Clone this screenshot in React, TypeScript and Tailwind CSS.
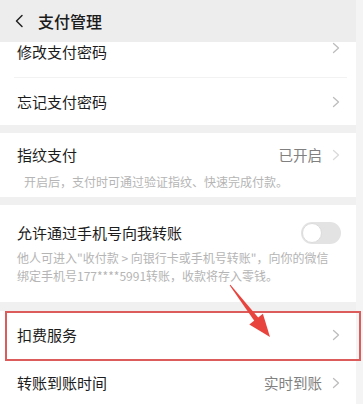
const font = {
  fontFamily: '"Noto Sans CJK SC", "Noto Sans", sans-serif',
};

function Chevron({ light = false }: { light?: boolean }) {
  return (
    <svg width="8" height="12" viewBox="0 0 8 12" className="shrink-0">
      <path
        d="M1.5 1.5l5 4.5-5 4.5"
        fill="none"
        stroke={light ? "#dadada" : "#bdbdbd"}
        strokeWidth="1.3"
        strokeLinecap="round"
        strokeLinejoin="round"
      />
    </svg>
  );
}

function Row({
  label,
  value,
  light = false,
  className = "",
}: {
  label: string;
  value?: string;
  light?: boolean;
  className?: string;
}) {
  return (
    <div className={`flex items-center justify-between pl-[17px] pr-[16px] ${className}`}>
      <span className="text-[15px] leading-[20px] text-[#1c1c1c]">{label}</span>
      <div className="flex items-center gap-[10px]">
        {value && (
          <span className="text-[14.5px] leading-[20px] text-[#808080]">{value}</span>
        )}
        <Chevron light={light} />
      </div>
    </div>
  );
}

export default function App() {
  return (
    <div
      className="relative h-[404px] w-[363px] overflow-hidden bg-[#f4f4f4]"
      style={font}
    >
      <div className="w-[356px] bg-[#f0f0f0]">
        {/* Header */}
        <div className="flex h-[42px] items-center gap-[14px] bg-[#ededed] pl-[14px]">
          <svg width="10" height="14" viewBox="0 0 10 14">
            <path
              d="M8 1.5L2.5 7 8 12.5"
              fill="none"
              stroke="#222"
              strokeWidth="1.5"
              strokeLinecap="round"
              strokeLinejoin="round"
            />
          </svg>
          <span className="text-[16px] font-medium leading-[20px] text-[#1a1a1a]">
            支付管理
          </span>
        </div>

        {/* Password */}
        <div className="bg-white">
          <Row label="修改支付密码" className="h-[35px] !items-start" />
          <div className="ml-[14px] mr-[9px] h-px bg-[#f2f2f2]" />
          <Row label="忘记支付密码" className="h-[47px]" />
        </div>

        {/* Fingerprint */}
        <div className="mt-[8px] bg-white pb-[7px] pt-[12px]">
          <Row label="指纹支付" value="已开启" light />
          <div className="mt-[9px] pl-[24px] text-[12px] leading-[16px] text-[#b5b5b5]">
            开启后，支付时可通过验证指纹、快速完成付款。
          </div>
        </div>

        {/* Phone transfer */}
        <div className="mt-[8px] bg-white pb-[18px] pt-[14px]">
          <div className="flex items-center justify-between pl-[17px] pr-[15px]">
            <span className="text-[15px] leading-[28px] text-[#1c1c1c]">
              允许通过手机号向我转账
            </span>
            <div className="flex h-[22px] w-[40px] items-center rounded-full bg-[#e3e3e3] pl-[1px]">
              <div className="h-[20px] w-[20px] rounded-full border border-[#dcdcdc] bg-white" />
            </div>
          </div>
          <div className="mt-[2px] whitespace-nowrap pl-[17px] text-[12px] leading-[17.5px] text-[#b5b5b5]">
            <div>他人可进入"收付款 &gt; 向银行卡或手机号转账"，向你的微信</div>
            <div>绑定手机号177****5991转账，收款将存入零钱。</div>
          </div>
        </div>

        {/* Services */}
        <div className="mt-[9px] bg-white">
          <Row label="扣费服务" className="h-[48px]" />
          <Row label="转账到账时间" value="实时到账" className="h-[48px]" />
        </div>
      </div>

      {/* Annotation box */}
      <div className="absolute left-[5px] top-[311px] h-[50px] w-[356px] border-2 border-[#dc5b5b]" />

      {/* Annotation arrow */}
      <svg
        className="absolute left-0 top-0"
        width="363"
        height="404"
        viewBox="0 0 363 404"
      >
        <polygon
          points="229.6,285.3 230.4,284.7 258.6,318 254.6,321.2"
          fill="#e8433d"
        />
        <polygon points="270,337 262.9,313.7 249.3,324.5" fill="#e8433d" />
      </svg>
    </div>
  );
}
